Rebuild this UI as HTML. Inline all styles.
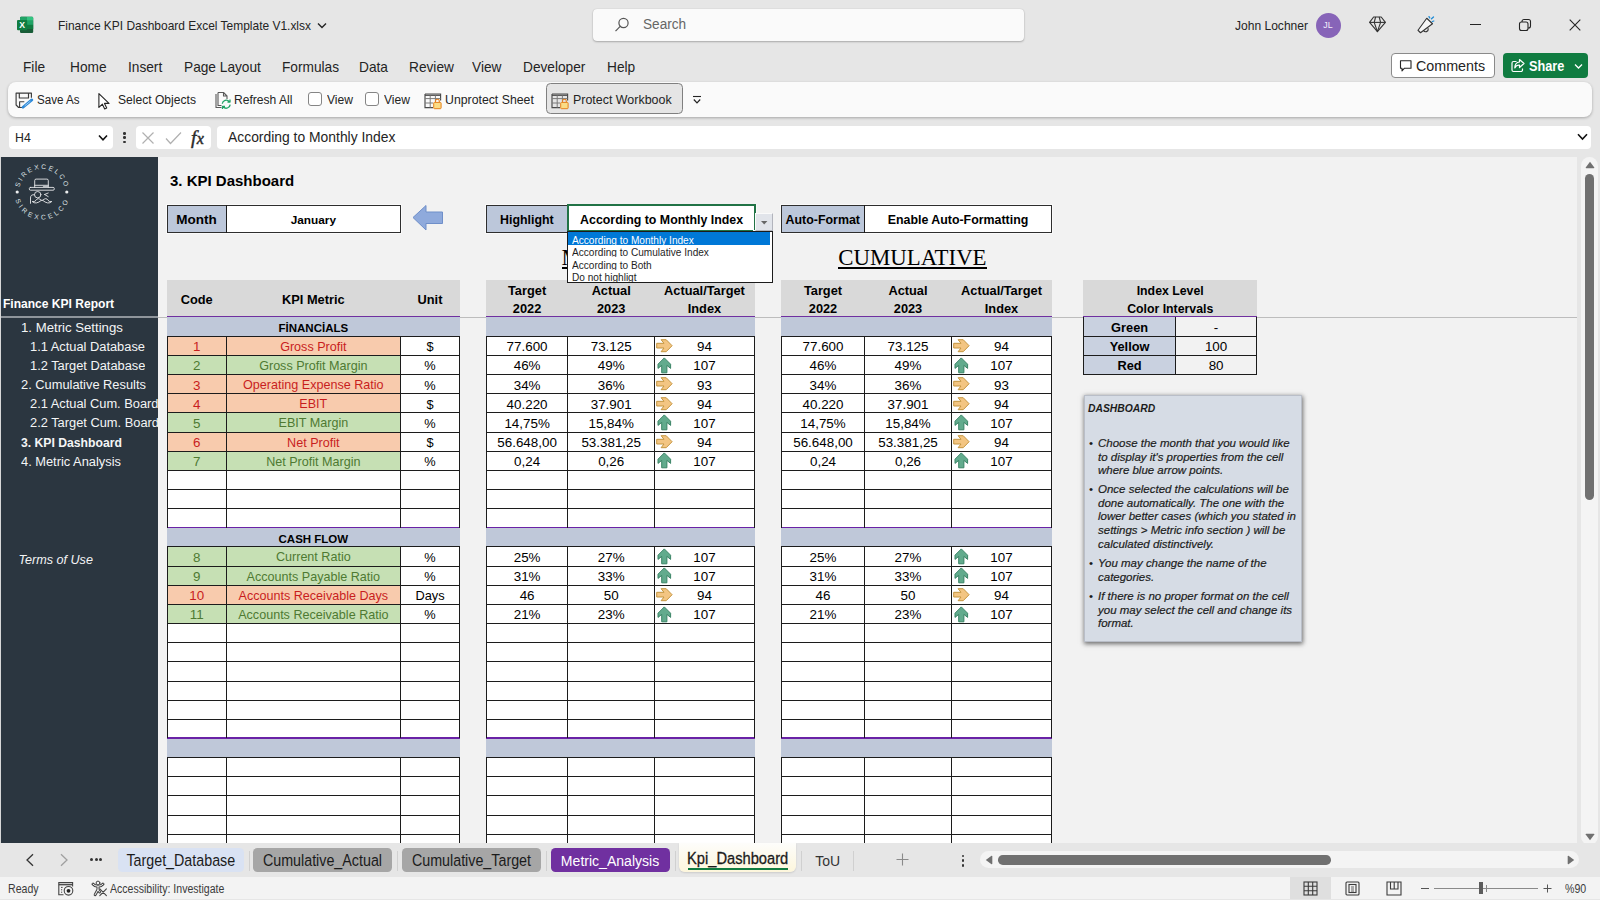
<!DOCTYPE html><html><head><meta charset="utf-8"><title>Finance KPI Dashboard Excel Template V1.xlsx</title><style>
*{box-sizing:border-box;margin:0;padding:0}
html,body{width:1600px;height:900px;overflow:hidden;background:#e6e6e6;font-family:"Liberation Sans",sans-serif;color:#1b1b1b}
.a{position:absolute;white-space:nowrap}
.c{position:absolute;white-space:nowrap;text-align:center;overflow:hidden}
.ui{font-family:"Liberation Sans",sans-serif;color:#242424}
.cell{font-size:12.6px;color:#000}
.b{font-weight:bold}
.i{font-style:italic}
.vl{position:absolute;width:1px;background:#1a1a1a}
.hl{position:absolute;height:1px;background:#1a1a1a}
</style></head><body>
<!-- title bar -->
<svg class="a" style="left:14px;top:14px" width="22" height="22" viewBox="0 0 22 22">
<rect x="6" y="2.7" width="13.2" height="16.3" rx="1.2" fill="#185c37"/>
<path d="M7.2 2.7 H12.6 V6.8 H6 V3.9 Q6 2.7 7.2 2.7Z" fill="#21a366"/><path d="M12.6 2.7 H18 Q19.2 2.7 19.2 3.9 V6.8 H12.6Z" fill="#33c481"/>
<rect x="6" y="6.8" width="6.6" height="4.1" fill="#107c41"/><rect x="12.6" y="6.8" width="6.6" height="4.1" fill="#21a366"/>
<rect x="6" y="10.9" width="6.6" height="4.1" fill="#185c37"/><rect x="12.6" y="10.9" width="6.6" height="4.1" fill="#107c41"/>
<rect x="3" y="6" width="10.2" height="10.2" rx="1" fill="#107c41"/>
<text x="8.1" y="14.2" font-family="Liberation Sans, sans-serif" font-weight="bold" font-size="8.6" fill="#fff" text-anchor="middle">X</text>
</svg>
<div class="a ui" style="left:58px;top:17.78px;font-size:12.72px;line-height:15.3px;color:#242424;transform:scaleX(0.94);transform-origin:0 50%;">Finance KPI Dashboard Excel Template V1.xlsx</div>
<svg class="a" style="left:316.5px;top:21.5px" width="10" height="8" viewBox="0 0 10 8"><path d="M1 1.5 L5 5.5 L9 1.5" fill="none" stroke="#242424" stroke-width="1.4"/></svg>
<div class="a" style="left:593px;top:9px;width:431px;height:32px;background:#fafafa;border-radius:4px;box-shadow:0 1px 2px rgba(0,0,0,.25),0 0 1px rgba(0,0,0,.2)"></div>
<svg class="a" style="left:613px;top:16px" width="18" height="18" viewBox="0 0 18 18"><circle cx="10.5" cy="7" r="4.6" fill="none" stroke="#555" stroke-width="1.2"/><path d="M7.2 10.4 L2.5 15.2" stroke="#555" stroke-width="1.2" fill="none"/></svg>
<div class="a ui" style="left:643px;top:16.18px;font-size:14.47px;line-height:17.4px;color:#666;transform:scaleX(0.94);transform-origin:0 50%;">Search</div>
<div class="a ui" style="left:1234.5px;top:18.27px;font-size:12.82px;line-height:15.4px;color:#242424;transform:scaleX(0.94);transform-origin:0 50%;">John Lochner</div>
<div class="a" style="left:1315.5px;top:12.5px;width:25px;height:25px;border-radius:50%;background:#8764b8"></div>
<div class="c" style="left:1315.5px;top:13px;width:25px;height:25px;line-height:25px;font-size:8.8px;color:#f3eefa;overflow:visible">JL</div>
<svg class="a" style="left:1367px;top:14px" width="20" height="20" viewBox="0 0 20 20" fill="none" stroke="#333" stroke-width="1.1" stroke-linejoin="round">
<path d="M6.6 3 H14.2 L18.4 8.4 L10.4 17.6 L2.6 8.4 Z"/><path d="M2.6 8.4 H18.4"/><path d="M8.6 3 L7.2 8.4 L10.4 17.6 L13.6 8.4 L12.2 3"/></svg>
<svg class="a" style="left:1415px;top:13px" width="22" height="22" viewBox="0 0 22 22" fill="none" stroke="#333" stroke-width="1.1" stroke-linejoin="round">
<path d="M11.75 5.25 L17.5 10.75 L5.5 19.75 L3 17.25 Z" fill="#f5f5f5"/><path d="M8.6 17.6 a2.5 2.5 0 0 0 4.6 -1.6 L12.8 15.2"/>
<path d="M14 3.6 l0.7 1.3 M16.5 5.8 l2-1.8 M17.3 8.5 l1.5-0.5" stroke="#1e8bd6" stroke-width="1.3" stroke-linecap="round"/></svg>
<div class="a" style="left:1470px;top:24px;width:11px;height:1px;background:#242424"></div>
<svg class="a" style="left:1518px;top:18px" width="14" height="14" viewBox="0 0 14 14" fill="none" stroke="#242424" stroke-width="1.1"><rect x="1.5" y="4" width="8.5" height="8.5" rx="2"/><path d="M4 4 V3.5 a2 2 0 0 1 2-2 H10.5 a2 2 0 0 1 2 2 V8 a2 2 0 0 1 -2 2 H10"/></svg>
<svg class="a" style="left:1569px;top:19px" width="12" height="12" viewBox="0 0 12 12"><path d="M0.7 0.7 L11.3 11.3 M11.3 0.7 L0.7 11.3" stroke="#242424" stroke-width="1.1"/></svg>
<!-- menu -->
<div class="a ui" style="left:22.5px;top:58.67px;font-size:14.57px;line-height:17.5px;color:#242424;transform:scaleX(0.94);transform-origin:0 50%;">File</div>
<div class="a ui" style="left:70px;top:58.67px;font-size:14.57px;line-height:17.5px;color:#242424;transform:scaleX(0.94);transform-origin:0 50%;">Home</div>
<div class="a ui" style="left:128px;top:58.67px;font-size:14.57px;line-height:17.5px;color:#242424;transform:scaleX(0.94);transform-origin:0 50%;">Insert</div>
<div class="a ui" style="left:184px;top:58.67px;font-size:14.57px;line-height:17.5px;color:#242424;transform:scaleX(0.94);transform-origin:0 50%;">Page Layout</div>
<div class="a ui" style="left:282px;top:58.67px;font-size:14.57px;line-height:17.5px;color:#242424;transform:scaleX(0.94);transform-origin:0 50%;">Formulas</div>
<div class="a ui" style="left:359px;top:58.67px;font-size:14.57px;line-height:17.5px;color:#242424;transform:scaleX(0.94);transform-origin:0 50%;">Data</div>
<div class="a ui" style="left:409px;top:58.67px;font-size:14.57px;line-height:17.5px;color:#242424;transform:scaleX(0.94);transform-origin:0 50%;">Review</div>
<div class="a ui" style="left:472px;top:58.67px;font-size:14.57px;line-height:17.5px;color:#242424;transform:scaleX(0.94);transform-origin:0 50%;">View</div>
<div class="a ui" style="left:523px;top:58.67px;font-size:14.57px;line-height:17.5px;color:#242424;transform:scaleX(0.94);transform-origin:0 50%;">Developer</div>
<div class="a ui" style="left:607px;top:58.67px;font-size:14.57px;line-height:17.5px;color:#242424;transform:scaleX(0.94);transform-origin:0 50%;">Help</div>
<div class="a" style="left:1391px;top:53px;width:103.5px;height:25px;background:#fff;border:1px solid #8a8a8a;border-radius:4px"></div>
<svg class="a" style="left:1399px;top:59px" width="14" height="14" viewBox="0 0 14 14" fill="none" stroke="#242424" stroke-width="1.1" stroke-linejoin="round"><path d="M1.5 1.8 H12 V9.2 H5.5 L3 11.8 V9.2 H1.5 Z"/></svg>
<div class="a ui" style="left:1416px;top:56.94px;font-size:15.21px;line-height:18.3px;color:#242424;transform:scaleX(0.94);transform-origin:0 50%;">Comments</div>
<div class="a" style="left:1503px;top:53px;width:84.5px;height:25px;background:#107c41;border-radius:4px"></div>
<svg class="a" style="left:1510px;top:58px" width="16" height="16" viewBox="0 0 16 16" fill="none" stroke="#fff" stroke-width="1.2" stroke-linejoin="round"><path d="M6.5 3.5 H3.5 a1.5 1.5 0 0 0 -1.5 1.5 V12 a1.5 1.5 0 0 0 1.5 1.5 H11 a1.5 1.5 0 0 0 1.5 -1.5 V10.5"/><path d="M9.5 1.5 L14 5.5 L9.5 9.5 V7 Q6 7 4.8 10 Q4.8 4.5 9.5 4 Z"/></svg>
<div class="a ui" style="left:1528.5px;top:58.36px;font-size:14.17px;line-height:17.0px;color:#fff;font-weight:bold;transform:scaleX(0.9);transform-origin:0 50%;">Share</div>
<svg class="a" style="left:1574px;top:63px" width="9" height="7" viewBox="0 0 9 7"><path d="M1 1.5 L4.5 5 L8 1.5" fill="none" stroke="#fff" stroke-width="1.3"/></svg>
<!-- toolbar -->
<div class="a" style="left:8px;top:82px;width:1584px;height:35px;background:#fafafa;border-radius:8px;box-shadow:0 1px 3px rgba(0,0,0,.28)"></div>
<svg class="a" style="left:15px;top:91px" width="19" height="18" viewBox="0 0 19 18" fill="none" stroke="#3b3b3b" stroke-width="1.15" stroke-linejoin="round">
<path d="M16.4 6.8 V2.1 H1.1 V14 L3.6 16.5 H7"/><path d="M4.3 2.1 V7 H13.5 V2.1"/><path d="M4.6 16.5 V10.7 H9.3"/>
<path d="M8 16.2 L16.8 8.9" stroke="#2b88d8" stroke-width="2.7" stroke-linecap="round"/><path d="M9.6 14.9 L15.4 10.1" stroke="#cfe6f8" stroke-width="0.7"/></svg>
<div class="a ui" style="left:36.9px;top:93.15px;font-size:12.61px;line-height:15.1px;color:#242424;transform:scaleX(0.92);transform-origin:0 50%;">Save As</div>
<svg class="a" style="left:97px;top:92px" width="14" height="18" viewBox="0 0 14 18"><path d="M1.9 1.7 V15.4 L5.4 12.2 L7.7 16.9 L9.7 16 L7.5 11.4 H12 Z" fill="#fff" stroke="#242424" stroke-width="1.1" stroke-linejoin="round"/></svg>
<div class="a ui" style="left:117.5px;top:92.0px;font-size:13.15px;line-height:15.8px;color:#242424;transform:scaleX(0.92);transform-origin:0 50%;">Select Objects</div>
<svg class="a" style="left:214px;top:91px" width="18" height="19" viewBox="0 0 18 19" fill="none" stroke-linejoin="round">
<path d="M2 3 V16.5 H7.5" stroke="#5a5a5a" stroke-width="1.1"/><path d="M4 1.5 H9.5 L13 5 V8 M4 1.5 V14.5 H7.5 M9.5 1.5 V5 H13" stroke="#5a5a5a" stroke-width="1.1"/>
<path d="M8.3 12.8 a4 4 0 0 1 7 -2.2 M16 8.5 V11 H13.5 M16.2 13.6 a4 4 0 0 1 -7 2.2 M8.5 18 V15.5 H11" stroke="#21a366" stroke-width="1.3"/></svg>
<div class="a ui" style="left:234px;top:92.0px;font-size:13.15px;line-height:15.8px;color:#242424;transform:scaleX(0.92);transform-origin:0 50%;">Refresh All</div>
<div class="a" style="left:308.2px;top:92.3px;width:13.8px;height:13.5px;background:#fff;border:1px solid #858585;border-radius:3px"></div>
<div class="a ui" style="left:327px;top:92.0px;font-size:13.15px;line-height:15.8px;color:#242424;transform:scaleX(0.92);transform-origin:0 50%;">View</div>
<div class="a" style="left:364.8px;top:92.3px;width:13.8px;height:13.5px;background:#fff;border:1px solid #858585;border-radius:3px"></div>
<div class="a ui" style="left:383.5px;top:92.0px;font-size:13.15px;line-height:15.8px;color:#242424;transform:scaleX(0.92);transform-origin:0 50%;">View</div>
<svg class="a" style="left:424px;top:91px" width="19" height="19" viewBox="0 0 19 19" fill="none">
<path d="M1 3 H16.6 V9.5 M1 3 V16.6 H9" stroke="#4a4a4a" stroke-width="1.15"/><path d="M1 4.3 H16.6" stroke="#4a4a4a" stroke-width="1.2"/>
<path d="M1 7.6 H16.6 M1 12 H9 M6.2 4.5 V16.6 M11.4 4.5 V10" stroke="#7a7a7a" stroke-width="1"/>
<rect x="9.7" y="11.4" width="7.4" height="6.3" rx="0.8" fill="#fbdc85" stroke="#e5801c" stroke-width="1"/><path d="M11.5 11.2 V10.1 a1.9 1.9 0 0 1 3.8 0 V11.2" stroke="#e5801c" stroke-width="1.1"/></svg>
<div class="a ui" style="left:445px;top:91.89px;font-size:13.37px;line-height:16.0px;color:#242424;transform:scaleX(0.92);transform-origin:0 50%;">Unprotect Sheet</div>
<div class="a" style="left:545.7px;top:83.2px;width:137px;height:31.3px;background:#e5e5e5;border:1px solid #808080;border-radius:4.5px"></div>
<svg class="a" style="left:551px;top:91px" width="19" height="19" viewBox="0 0 19 19" fill="none">
<path d="M1 3 H16.6 V9.5 M1 3 V16.6 H9" stroke="#4a4a4a" stroke-width="1.15"/><path d="M1 4.3 H16.6" stroke="#4a4a4a" stroke-width="1.2"/>
<path d="M1 7.6 H16.6 M1 12 H9 M6.2 4.5 V16.6 M11.4 4.5 V10" stroke="#7a7a7a" stroke-width="1"/>
<rect x="9.7" y="11.4" width="7.4" height="6.3" rx="0.8" fill="#fbdc85" stroke="#e5801c" stroke-width="1"/><path d="M11.5 11.2 V10.1 a1.9 1.9 0 0 1 3.8 0 V11.2" stroke="#e5801c" stroke-width="1.1"/></svg>
<div class="a ui" style="left:572.5px;top:91.8px;font-size:13.53px;line-height:16.2px;color:#242424;transform:scaleX(0.92);transform-origin:0 50%;">Protect Workbook</div>
<svg class="a" style="left:692px;top:95px" width="10" height="10" viewBox="0 0 10 10"><path d="M1 1.5 H9" stroke="#242424" stroke-width="1.1"/><path d="M1.8 4.5 L5 7.8 L8.2 4.5" fill="none" stroke="#242424" stroke-width="1.2"/></svg>
<!-- formula bar -->
<div class="a" style="left:9px;top:126px;width:104px;height:23px;background:#fff;border-radius:4px"></div>
<div class="a ui" style="left:14.5px;top:130.64px;font-size:12.68px;line-height:15.2px;color:#242424;transform:scaleX(0.97);transform-origin:0 50%;">H4</div>
<svg class="a" style="left:98px;top:134px" width="10" height="8" viewBox="0 0 10 8"><path d="M1 1.5 L5 5.8 L9 1.5" fill="none" stroke="#111" stroke-width="1.6"/></svg>
<div class="a" style="left:123.3px;top:132px;width:2.5px;height:2.5px;background:#333;border-radius:50%"></div>
<div class="a" style="left:123.3px;top:136.3px;width:2.5px;height:2.5px;background:#333;border-radius:50%"></div>
<div class="a" style="left:123.3px;top:140.6px;width:2.5px;height:2.5px;background:#333;border-radius:50%"></div>
<div class="a" style="left:136px;top:126px;width:75px;height:23px;background:#fff;border-radius:4px"></div>
<svg class="a" style="left:141px;top:131px" width="14" height="14" viewBox="0 0 14 14"><path d="M1.5 1.5 L12.5 12.5 M12.5 1.5 L1.5 12.5" stroke="#b0b0b0" stroke-width="1.2"/></svg>
<svg class="a" style="left:165px;top:131px" width="17" height="14" viewBox="0 0 17 14"><path d="M1 7.5 L5.5 12.5 L16 1.5" fill="none" stroke="#b0b0b0" stroke-width="1.2"/></svg>
<div class="a" style="left:191px;top:125.5px;font:italic 19.5px/23px 'Liberation Serif',serif;color:#2a2a2a;letter-spacing:0.3px;-webkit-text-stroke:0.45px #2a2a2a">f<span style="font-size:16px">x</span></div>
<div class="a" style="left:217px;top:126px;width:1374px;height:23px;background:#fff;border-radius:4px"></div>
<div class="a ui" style="left:227.5px;top:129.09px;font-size:14.32px;line-height:17.2px;color:#242424;transform:scaleX(0.97);transform-origin:0 50%;">According to Monthly Index</div>
<svg class="a" style="left:1577px;top:133px" width="11" height="8" viewBox="0 0 11 8"><path d="M1 1.2 L5.5 6 L10 1.2" fill="none" stroke="#111" stroke-width="1.6"/></svg>
<!-- sheet -->
<div class="a" style="left:0px;top:157px;width:1577.3px;height:686.1px;background:#f2f2f2"></div>
<div class="a" style="left:0px;top:157.4px;width:158px;height:685.7px;background:#2b3640"></div>
<!-- sidebar -->
<div class="a" style="left:0px;top:157px;width:1.2px;height:686.1px;background:#d8d8d8"></div>
<svg class="a" style="left:12.3px;top:162px" width="60" height="60" viewBox="-30 -30 60 60">
<defs><path id="arcT" d="M -22.9 0 A 22.9 22.9 0 0 1 22.9 0"/><path id="arcB" d="M -27.6 0 A 27.6 27.6 0 0 0 27.6 0"/></defs>
<g font-family="Liberation Sans, sans-serif" font-size="6.7" fill="#dfe2e5">
<text letter-spacing="2.05"><textPath href="#arcT" startOffset="50.8%" text-anchor="middle">SIREXCELCO</textPath></text>
<text letter-spacing="2.9"><textPath href="#arcB" startOffset="51%" text-anchor="middle">SIREXCELCO</textPath></text></g>
<circle cx="-24.8" cy="0" r="1.6" fill="#eceeef"/><circle cx="24.8" cy="0" r="1.6" fill="#eceeef"/>
<g fill="none" stroke="#e6e8ea" stroke-width="0.9" stroke-linejoin="round" stroke-linecap="round">
<rect x="-12.7" y="-4.6" width="25" height="2.8" rx="1.2"/>
<path d="M-7.3 -4.6 V-11.5 a1.4 1.4 0 0 1 1.4 -1.4 H4.9 a1.4 1.4 0 0 1 1.4 1.4 V-4.6"/><path d="M-7.3 -6.7 H6.3"/><path d="M1.5 -5.7 H6" stroke-width="1.4" stroke="#b9bec3"/>
<circle cx="-4.3" cy="2.7" r="3.2"/><path d="M-7.5 2.8 q-4 -0.8 -4 3.2 V11.3"/>
<path d="M2.6 2.5 L6.2 1 M2.6 2.5 L6.2 4.6"/>
<path d="M-0.6 8.3 q-3.6 -3.4 -5.4 0 q-1.6 2 -3.8 1.2 q3.6 3.6 9.2 -1.2 Z"/>
<path d="M0.6 8.3 q3.6 -3.4 5.4 0 q1.6 2 3.8 1.2 q-3.6 3.6 -9.2 -1.2 Z"/>
</g></svg>
<div class="a" style="left:3px;top:296.8px;font-size:12.05px;line-height:14.5px;color:#fff;font-weight:bold">Finance KPI Report</div>
<div class="a" style="left:1px;top:316.4px;width:157px;height:1.6px;background:#8f959b"></div>
<div class="a" style="left:21px;top:319px;height:18px;line-height:18px;font-size:13.2px;color:#f4f5f6;max-width:137px;overflow:hidden">1. Metric Settings</div>
<div class="a" style="left:30px;top:338px;height:18px;line-height:18px;font-size:12.85px;color:#f4f5f6;max-width:128px;overflow:hidden">1.1 Actual Database</div>
<div class="a" style="left:30px;top:357px;height:18px;line-height:18px;font-size:12.85px;color:#f4f5f6;max-width:128px;overflow:hidden">1.2 Target Database</div>
<div class="a" style="left:21px;top:376px;height:18px;line-height:18px;font-size:12.85px;color:#f4f5f6;max-width:137px;overflow:hidden">2. Cumulative Results</div>
<div class="a" style="left:30px;top:395px;height:18px;line-height:18px;font-size:12.85px;color:#f4f5f6;max-width:128px;overflow:hidden">2.1 Actual Cum. Board</div>
<div class="a" style="left:30px;top:414px;height:18px;line-height:18px;font-size:12.85px;color:#f4f5f6;max-width:128px;overflow:hidden">2.2 Target Cum. Board</div>
<div class="a" style="left:21px;top:433.5px;height:18px;line-height:18px;font-size:12.2px;color:#f4f5f6;font-weight:bold;max-width:137px;overflow:hidden">3. KPI Dashboard</div>
<div class="a" style="left:21px;top:453px;height:18px;line-height:18px;font-size:12.85px;color:#f4f5f6;max-width:137px;overflow:hidden">4. Metric Analysis</div>
<div class="a" style="left:18.5px;top:552.5px;font-size:12.6px;line-height:15.1px;color:#f4f5f6;font-style:italic">Terms of Use</div>
<div class="a" style="left:158px;top:316.7px;width:1419.3px;height:1px;background:#bdbdbd"></div>
<div class="a" style="left:170px;top:172.2px;font-size:15.0px;line-height:18.0px;font-weight:bold;color:#000">3. KPI Dashboard</div>
<div class="a" style="left:166.5px;top:204.9px;width:234.70000000000002px;height:27.7px;background:#fff;border:1.3px solid #2e2e2e;box-shadow:0 0 0 0.8px rgba(255,255,255,.75)"></div>
<div class="a" style="left:167.7px;top:206px;width:58.5px;height:25.8px;background:#bcc7da"></div>
<div class="a" style="left:225.7px;top:205px;width:1px;height:27.8px;background:#1c1c1c"></div>
<div class="c" style="left:166.7px;top:205.5px;width:59.5px;height:28px;line-height:28px;font-size:13.5px;font-weight:bold;color:#000">Month</div>
<div class="c" style="left:226.2px;top:205.5px;width:174.3px;height:28px;line-height:28px;font-size:11.8px;font-weight:bold;color:#000">January</div>
<div class="a" style="left:485.6px;top:204.9px;width:270.3999999999999px;height:27.7px;background:#fff;border:1.3px solid #2e2e2e;box-shadow:0 0 0 0.8px rgba(255,255,255,.75)"></div>
<div class="a" style="left:486.8px;top:206px;width:81.09999999999997px;height:25.8px;background:#bcc7da"></div>
<div class="a" style="left:567.4px;top:205px;width:1px;height:27.8px;background:#1c1c1c"></div>
<div class="c" style="left:485.8px;top:205.5px;width:82.09999999999997px;height:28px;line-height:28px;font-size:12.4px;font-weight:bold;color:#000">Highlight</div>
<div class="c" style="left:567.9px;top:205.5px;width:187.39999999999998px;height:28px;line-height:28px;font-size:12.38px;font-weight:bold;color:#000">According to Monthly Index</div>
<div class="a" style="left:780.8px;top:204.9px;width:271.4px;height:27.7px;background:#fff;border:1.3px solid #2e2e2e;box-shadow:0 0 0 0.8px rgba(255,255,255,.75)"></div>
<div class="a" style="left:782px;top:206px;width:82.5px;height:25.8px;background:#bcc7da"></div>
<div class="a" style="left:864.0px;top:205px;width:1px;height:27.8px;background:#1c1c1c"></div>
<div class="c" style="left:781px;top:205.5px;width:83.5px;height:28px;line-height:28px;font-size:12.4px;font-weight:bold;color:#000">Auto-Format</div>
<div class="c" style="left:864.5px;top:205.5px;width:187.0px;height:28px;line-height:28px;font-size:12.4px;font-weight:bold;color:#000">Enable Auto-Formatting</div>
<svg class="a" style="left:411px;top:203px" width="34" height="30" viewBox="0 0 34 30"><path d="M2 14.5 L15 2.5 V9 H31.5 V20.5 H15 V27 Z" fill="#8faadc" stroke="#6f8fc9" stroke-width="1"/></svg>
<div class="a" style="left:561.5px;top:245.4px;font:22.83px/26px 'Liberation Serif',serif;color:#000">MONTHLY</div>
<div class="a" style="left:561.5px;top:267px;width:140px;height:1.6px;background:#000"></div>
<div class="a" style="left:838.2px;top:245.4px;font:22.83px/26px 'Liberation Serif',serif;color:#000">CUMULATIVE</div>
<div class="a" style="left:838.2px;top:267px;width:148.4px;height:1.6px;background:#000"></div>
<div class="a" style="left:166.7px;top:280px;width:293.3px;height:36.5px;background:#d9d9d9"></div>
<div class="c" style="left:167.2px;top:290.5px;width:59.0px;height:18px;line-height:18px;font-size:12.8px;font-weight:bold;color:#000">Code</div>
<div class="c" style="left:226.2px;top:290.5px;width:174.3px;height:18px;line-height:18px;font-size:12.8px;font-weight:bold;color:#000">KPI Metric</div>
<div class="c" style="left:400.5px;top:290.5px;width:59.0px;height:18px;line-height:18px;font-size:12.8px;font-weight:bold;color:#000">Unit</div>
<div class="a" style="left:166.7px;top:316.2px;width:293.3px;height:1.2px;background:#7030a0"></div>
<div class="a" style="left:485.8px;top:280px;width:269.09999999999997px;height:36.5px;background:#d9d9d9"></div>
<div class="c" style="left:476.3px;top:281.5px;width:101.59999999999997px;height:18px;line-height:18px;font-size:12.8px;font-weight:bold;color:#000;overflow:visible">Target</div>
<div class="c" style="left:476.3px;top:299.5px;width:101.59999999999997px;height:18px;line-height:18px;font-size:12.8px;font-weight:bold;color:#000;overflow:visible">2022</div>
<div class="c" style="left:557.9px;top:281.5px;width:106.60000000000002px;height:18px;line-height:18px;font-size:12.8px;font-weight:bold;color:#000;overflow:visible">Actual</div>
<div class="c" style="left:557.9px;top:299.5px;width:106.60000000000002px;height:18px;line-height:18px;font-size:12.8px;font-weight:bold;color:#000;overflow:visible">2023</div>
<div class="c" style="left:644.5px;top:281.5px;width:119.89999999999998px;height:18px;line-height:18px;font-size:12.8px;font-weight:bold;color:#000;overflow:visible">Actual/Target</div>
<div class="c" style="left:644.5px;top:299.5px;width:119.89999999999998px;height:18px;line-height:18px;font-size:12.8px;font-weight:bold;color:#000;overflow:visible">Index</div>
<div class="a" style="left:485.8px;top:316.2px;width:269.1px;height:1.2px;background:#7030a0"></div>
<div class="a" style="left:781.0px;top:280px;width:271.0px;height:36.5px;background:#d9d9d9"></div>
<div class="c" style="left:771.5px;top:281.5px;width:103.0px;height:18px;line-height:18px;font-size:12.8px;font-weight:bold;color:#000;overflow:visible">Target</div>
<div class="c" style="left:771.5px;top:299.5px;width:103.0px;height:18px;line-height:18px;font-size:12.8px;font-weight:bold;color:#000;overflow:visible">2022</div>
<div class="c" style="left:854.5px;top:281.5px;width:107.0px;height:18px;line-height:18px;font-size:12.8px;font-weight:bold;color:#000;overflow:visible">Actual</div>
<div class="c" style="left:854.5px;top:299.5px;width:107.0px;height:18px;line-height:18px;font-size:12.8px;font-weight:bold;color:#000;overflow:visible">2023</div>
<div class="c" style="left:941.5px;top:281.5px;width:120.0px;height:18px;line-height:18px;font-size:12.8px;font-weight:bold;color:#000;overflow:visible">Actual/Target</div>
<div class="c" style="left:941.5px;top:299.5px;width:120.0px;height:18px;line-height:18px;font-size:12.8px;font-weight:bold;color:#000;overflow:visible">Index</div>
<div class="a" style="left:781.0px;top:316.2px;width:271.0px;height:1.2px;background:#7030a0"></div>
<div class="a" style="left:166.7px;top:317.45000000000005px;width:293.3px;height:18.849999999999998px;background:#bfc8d9"></div>
<div class="a" style="left:167.2px;top:336.3px;width:292.3px;height:191.49999999999994px;background:#fff"></div>
<div class="a" style="left:485.8px;top:317.45000000000005px;width:269.09999999999997px;height:18.849999999999998px;background:#bfc8d9"></div>
<div class="a" style="left:486.3px;top:336.3px;width:268.09999999999997px;height:191.49999999999994px;background:#fff"></div>
<div class="a" style="left:781.0px;top:317.45000000000005px;width:271.0px;height:18.849999999999998px;background:#bfc8d9"></div>
<div class="a" style="left:781.5px;top:336.3px;width:270.0px;height:191.49999999999994px;background:#fff"></div>
<div class="c" style="left:167.2px;top:318.95000000000005px;width:292.3px;height:19.15px;line-height:19.15px;font-size:11.5px;font-weight:bold;color:#000">FİNANCİALS</div>
<div class="a" style="left:167.2px;top:336.3px;width:233.3px;height:19.15px;background:#f8cbad"></div>
<div class="c" style="left:167.2px;top:337.3px;width:59.0px;height:19.15px;line-height:19.15px;font-size:13.4px;color:#c81e1e">1</div>
<div class="c" style="left:226.2px;top:337.8px;width:174.3px;height:19.15px;line-height:19.15px;font-size:12.58px;color:#c81e1e">Gross Profit</div>
<div class="c" style="left:400.5px;top:337.3px;width:59.0px;height:19.15px;line-height:19.15px;font-size:12.8px;color:#000">$</div>
<div class="c" style="left:486.3px;top:337.3px;width:81.59999999999997px;height:19.15px;line-height:19.15px;font-size:13.4px;color:#000">77.600</div>
<div class="c" style="left:567.9px;top:337.3px;width:86.60000000000002px;height:19.15px;line-height:19.15px;font-size:13.4px;color:#000">73.125</div>
<div class="c" style="left:654.5px;top:337.3px;width:99.89999999999998px;height:19.15px;line-height:19.15px;font-size:13.4px;color:#000">94</div>
<svg class="a" style="left:656.4px;top:339.1px" width="17" height="14" viewBox="0 0 17 14"><path d="M0.7 4.3 H8 L5.1 0.7 H10.2 L16.1 6.7 L10.2 12.7 H5.1 L8 9 H0.7 Z" fill="#f3c582" stroke="#c4953f" stroke-width="1" stroke-linejoin="round"/></svg>
<div class="c" style="left:781.5px;top:337.3px;width:83.0px;height:19.15px;line-height:19.15px;font-size:13.4px;color:#000">77.600</div>
<div class="c" style="left:864.5px;top:337.3px;width:87.0px;height:19.15px;line-height:19.15px;font-size:13.4px;color:#000">73.125</div>
<div class="c" style="left:951.5px;top:337.3px;width:100.0px;height:19.15px;line-height:19.15px;font-size:13.4px;color:#000">94</div>
<svg class="a" style="left:953.4px;top:339.1px" width="17" height="14" viewBox="0 0 17 14"><path d="M0.7 4.3 H8 L5.1 0.7 H10.2 L16.1 6.7 L10.2 12.7 H5.1 L8 9 H0.7 Z" fill="#f3c582" stroke="#c4953f" stroke-width="1" stroke-linejoin="round"/></svg>
<div class="a" style="left:167.2px;top:355.45px;width:233.3px;height:19.15px;background:#c6e0b4"></div>
<div class="c" style="left:167.2px;top:356.45px;width:59.0px;height:19.15px;line-height:19.15px;font-size:13.4px;color:#4e7a32">2</div>
<div class="c" style="left:226.2px;top:356.95px;width:174.3px;height:19.15px;line-height:19.15px;font-size:12.58px;color:#4e7a32">Gross Profit Margin</div>
<div class="c" style="left:400.5px;top:356.45px;width:59.0px;height:19.15px;line-height:19.15px;font-size:12.8px;color:#000">%</div>
<div class="c" style="left:486.3px;top:356.45px;width:81.59999999999997px;height:19.15px;line-height:19.15px;font-size:13.4px;color:#000">46%</div>
<div class="c" style="left:567.9px;top:356.45px;width:86.60000000000002px;height:19.15px;line-height:19.15px;font-size:13.4px;color:#000">49%</div>
<div class="c" style="left:654.5px;top:356.45px;width:99.89999999999998px;height:19.15px;line-height:19.15px;font-size:13.4px;color:#000">107</div>
<svg class="a" style="left:657.1px;top:356.6px" width="15" height="17" viewBox="0 0 15 17"><path d="M7.3 0.9 L13.6 7.2 V11.4 L9.9 8.4 V15.8 H4.7 V8.4 L1 11.4 V7.2 Z" fill="#62ab8d" stroke="#3b8466" stroke-width="1" stroke-linejoin="round"/></svg>
<div class="c" style="left:781.5px;top:356.45px;width:83.0px;height:19.15px;line-height:19.15px;font-size:13.4px;color:#000">46%</div>
<div class="c" style="left:864.5px;top:356.45px;width:87.0px;height:19.15px;line-height:19.15px;font-size:13.4px;color:#000">49%</div>
<div class="c" style="left:951.5px;top:356.45px;width:100.0px;height:19.15px;line-height:19.15px;font-size:13.4px;color:#000">107</div>
<svg class="a" style="left:954.1px;top:356.6px" width="15" height="17" viewBox="0 0 15 17"><path d="M7.3 0.9 L13.6 7.2 V11.4 L9.9 8.4 V15.8 H4.7 V8.4 L1 11.4 V7.2 Z" fill="#62ab8d" stroke="#3b8466" stroke-width="1" stroke-linejoin="round"/></svg>
<div class="a" style="left:167.2px;top:374.6px;width:233.3px;height:19.15px;background:#f8cbad"></div>
<div class="c" style="left:167.2px;top:375.6px;width:59.0px;height:19.15px;line-height:19.15px;font-size:13.4px;color:#c81e1e">3</div>
<div class="c" style="left:226.2px;top:376.1px;width:174.3px;height:19.15px;line-height:19.15px;font-size:12.58px;color:#c81e1e">Operating Expense Ratio</div>
<div class="c" style="left:400.5px;top:375.6px;width:59.0px;height:19.15px;line-height:19.15px;font-size:12.8px;color:#000">%</div>
<div class="c" style="left:486.3px;top:375.6px;width:81.59999999999997px;height:19.15px;line-height:19.15px;font-size:13.4px;color:#000">34%</div>
<div class="c" style="left:567.9px;top:375.6px;width:86.60000000000002px;height:19.15px;line-height:19.15px;font-size:13.4px;color:#000">36%</div>
<div class="c" style="left:654.5px;top:375.6px;width:99.89999999999998px;height:19.15px;line-height:19.15px;font-size:13.4px;color:#000">93</div>
<svg class="a" style="left:656.4px;top:377.4px" width="17" height="14" viewBox="0 0 17 14"><path d="M0.7 4.3 H8 L5.1 0.7 H10.2 L16.1 6.7 L10.2 12.7 H5.1 L8 9 H0.7 Z" fill="#f3c582" stroke="#c4953f" stroke-width="1" stroke-linejoin="round"/></svg>
<div class="c" style="left:781.5px;top:375.6px;width:83.0px;height:19.15px;line-height:19.15px;font-size:13.4px;color:#000">34%</div>
<div class="c" style="left:864.5px;top:375.6px;width:87.0px;height:19.15px;line-height:19.15px;font-size:13.4px;color:#000">36%</div>
<div class="c" style="left:951.5px;top:375.6px;width:100.0px;height:19.15px;line-height:19.15px;font-size:13.4px;color:#000">93</div>
<svg class="a" style="left:953.4px;top:377.4px" width="17" height="14" viewBox="0 0 17 14"><path d="M0.7 4.3 H8 L5.1 0.7 H10.2 L16.1 6.7 L10.2 12.7 H5.1 L8 9 H0.7 Z" fill="#f3c582" stroke="#c4953f" stroke-width="1" stroke-linejoin="round"/></svg>
<div class="a" style="left:167.2px;top:393.75px;width:233.3px;height:19.15px;background:#f8cbad"></div>
<div class="c" style="left:167.2px;top:394.75px;width:59.0px;height:19.15px;line-height:19.15px;font-size:13.4px;color:#c81e1e">4</div>
<div class="c" style="left:226.2px;top:395.25px;width:174.3px;height:19.15px;line-height:19.15px;font-size:12.58px;color:#c81e1e">EBIT</div>
<div class="c" style="left:400.5px;top:394.75px;width:59.0px;height:19.15px;line-height:19.15px;font-size:12.8px;color:#000">$</div>
<div class="c" style="left:486.3px;top:394.75px;width:81.59999999999997px;height:19.15px;line-height:19.15px;font-size:13.4px;color:#000">40.220</div>
<div class="c" style="left:567.9px;top:394.75px;width:86.60000000000002px;height:19.15px;line-height:19.15px;font-size:13.4px;color:#000">37.901</div>
<div class="c" style="left:654.5px;top:394.75px;width:99.89999999999998px;height:19.15px;line-height:19.15px;font-size:13.4px;color:#000">94</div>
<svg class="a" style="left:656.4px;top:396.6px" width="17" height="14" viewBox="0 0 17 14"><path d="M0.7 4.3 H8 L5.1 0.7 H10.2 L16.1 6.7 L10.2 12.7 H5.1 L8 9 H0.7 Z" fill="#f3c582" stroke="#c4953f" stroke-width="1" stroke-linejoin="round"/></svg>
<div class="c" style="left:781.5px;top:394.75px;width:83.0px;height:19.15px;line-height:19.15px;font-size:13.4px;color:#000">40.220</div>
<div class="c" style="left:864.5px;top:394.75px;width:87.0px;height:19.15px;line-height:19.15px;font-size:13.4px;color:#000">37.901</div>
<div class="c" style="left:951.5px;top:394.75px;width:100.0px;height:19.15px;line-height:19.15px;font-size:13.4px;color:#000">94</div>
<svg class="a" style="left:953.4px;top:396.6px" width="17" height="14" viewBox="0 0 17 14"><path d="M0.7 4.3 H8 L5.1 0.7 H10.2 L16.1 6.7 L10.2 12.7 H5.1 L8 9 H0.7 Z" fill="#f3c582" stroke="#c4953f" stroke-width="1" stroke-linejoin="round"/></svg>
<div class="a" style="left:167.2px;top:412.9px;width:233.3px;height:19.15px;background:#c6e0b4"></div>
<div class="c" style="left:167.2px;top:413.9px;width:59.0px;height:19.15px;line-height:19.15px;font-size:13.4px;color:#4e7a32">5</div>
<div class="c" style="left:226.2px;top:414.4px;width:174.3px;height:19.15px;line-height:19.15px;font-size:12.58px;color:#4e7a32">EBIT Margin</div>
<div class="c" style="left:400.5px;top:413.9px;width:59.0px;height:19.15px;line-height:19.15px;font-size:12.8px;color:#000">%</div>
<div class="c" style="left:486.3px;top:413.9px;width:81.59999999999997px;height:19.15px;line-height:19.15px;font-size:13.4px;color:#000">14,75%</div>
<div class="c" style="left:567.9px;top:413.9px;width:86.60000000000002px;height:19.15px;line-height:19.15px;font-size:13.4px;color:#000">15,84%</div>
<div class="c" style="left:654.5px;top:413.9px;width:99.89999999999998px;height:19.15px;line-height:19.15px;font-size:13.4px;color:#000">107</div>
<svg class="a" style="left:657.1px;top:414.1px" width="15" height="17" viewBox="0 0 15 17"><path d="M7.3 0.9 L13.6 7.2 V11.4 L9.9 8.4 V15.8 H4.7 V8.4 L1 11.4 V7.2 Z" fill="#62ab8d" stroke="#3b8466" stroke-width="1" stroke-linejoin="round"/></svg>
<div class="c" style="left:781.5px;top:413.9px;width:83.0px;height:19.15px;line-height:19.15px;font-size:13.4px;color:#000">14,75%</div>
<div class="c" style="left:864.5px;top:413.9px;width:87.0px;height:19.15px;line-height:19.15px;font-size:13.4px;color:#000">15,84%</div>
<div class="c" style="left:951.5px;top:413.9px;width:100.0px;height:19.15px;line-height:19.15px;font-size:13.4px;color:#000">107</div>
<svg class="a" style="left:954.1px;top:414.1px" width="15" height="17" viewBox="0 0 15 17"><path d="M7.3 0.9 L13.6 7.2 V11.4 L9.9 8.4 V15.8 H4.7 V8.4 L1 11.4 V7.2 Z" fill="#62ab8d" stroke="#3b8466" stroke-width="1" stroke-linejoin="round"/></svg>
<div class="a" style="left:167.2px;top:432.05px;width:233.3px;height:19.15px;background:#f8cbad"></div>
<div class="c" style="left:167.2px;top:433.05px;width:59.0px;height:19.15px;line-height:19.15px;font-size:13.4px;color:#c81e1e">6</div>
<div class="c" style="left:226.2px;top:433.55px;width:174.3px;height:19.15px;line-height:19.15px;font-size:12.58px;color:#c81e1e">Net Profit</div>
<div class="c" style="left:400.5px;top:433.05px;width:59.0px;height:19.15px;line-height:19.15px;font-size:12.8px;color:#000">$</div>
<div class="c" style="left:486.3px;top:433.05px;width:81.59999999999997px;height:19.15px;line-height:19.15px;font-size:13.4px;color:#000">56.648,00</div>
<div class="c" style="left:567.9px;top:433.05px;width:86.60000000000002px;height:19.15px;line-height:19.15px;font-size:13.4px;color:#000">53.381,25</div>
<div class="c" style="left:654.5px;top:433.05px;width:99.89999999999998px;height:19.15px;line-height:19.15px;font-size:13.4px;color:#000">94</div>
<svg class="a" style="left:656.4px;top:434.9px" width="17" height="14" viewBox="0 0 17 14"><path d="M0.7 4.3 H8 L5.1 0.7 H10.2 L16.1 6.7 L10.2 12.7 H5.1 L8 9 H0.7 Z" fill="#f3c582" stroke="#c4953f" stroke-width="1" stroke-linejoin="round"/></svg>
<div class="c" style="left:781.5px;top:433.05px;width:83.0px;height:19.15px;line-height:19.15px;font-size:13.4px;color:#000">56.648,00</div>
<div class="c" style="left:864.5px;top:433.05px;width:87.0px;height:19.15px;line-height:19.15px;font-size:13.4px;color:#000">53.381,25</div>
<div class="c" style="left:951.5px;top:433.05px;width:100.0px;height:19.15px;line-height:19.15px;font-size:13.4px;color:#000">94</div>
<svg class="a" style="left:953.4px;top:434.9px" width="17" height="14" viewBox="0 0 17 14"><path d="M0.7 4.3 H8 L5.1 0.7 H10.2 L16.1 6.7 L10.2 12.7 H5.1 L8 9 H0.7 Z" fill="#f3c582" stroke="#c4953f" stroke-width="1" stroke-linejoin="round"/></svg>
<div class="a" style="left:167.2px;top:451.2px;width:233.3px;height:19.15px;background:#c6e0b4"></div>
<div class="c" style="left:167.2px;top:452.2px;width:59.0px;height:19.15px;line-height:19.15px;font-size:13.4px;color:#4e7a32">7</div>
<div class="c" style="left:226.2px;top:452.7px;width:174.3px;height:19.15px;line-height:19.15px;font-size:12.58px;color:#4e7a32">Net Profit Margin</div>
<div class="c" style="left:400.5px;top:452.2px;width:59.0px;height:19.15px;line-height:19.15px;font-size:12.8px;color:#000">%</div>
<div class="c" style="left:486.3px;top:452.2px;width:81.59999999999997px;height:19.15px;line-height:19.15px;font-size:13.4px;color:#000">0,24</div>
<div class="c" style="left:567.9px;top:452.2px;width:86.60000000000002px;height:19.15px;line-height:19.15px;font-size:13.4px;color:#000">0,26</div>
<div class="c" style="left:654.5px;top:452.2px;width:99.89999999999998px;height:19.15px;line-height:19.15px;font-size:13.4px;color:#000">107</div>
<svg class="a" style="left:657.1px;top:452.4px" width="15" height="17" viewBox="0 0 15 17"><path d="M7.3 0.9 L13.6 7.2 V11.4 L9.9 8.4 V15.8 H4.7 V8.4 L1 11.4 V7.2 Z" fill="#62ab8d" stroke="#3b8466" stroke-width="1" stroke-linejoin="round"/></svg>
<div class="c" style="left:781.5px;top:452.2px;width:83.0px;height:19.15px;line-height:19.15px;font-size:13.4px;color:#000">0,24</div>
<div class="c" style="left:864.5px;top:452.2px;width:87.0px;height:19.15px;line-height:19.15px;font-size:13.4px;color:#000">0,26</div>
<div class="c" style="left:951.5px;top:452.2px;width:100.0px;height:19.15px;line-height:19.15px;font-size:13.4px;color:#000">107</div>
<svg class="a" style="left:954.1px;top:452.4px" width="15" height="17" viewBox="0 0 15 17"><path d="M7.3 0.9 L13.6 7.2 V11.4 L9.9 8.4 V15.8 H4.7 V8.4 L1 11.4 V7.2 Z" fill="#62ab8d" stroke="#3b8466" stroke-width="1" stroke-linejoin="round"/></svg>
<div class="a" style="left:166.7px;top:335.8px;width:293.3px;height:1px;background:#1c1c1c"></div>
<div class="a" style="left:166.7px;top:354.95px;width:293.3px;height:1px;background:#1c1c1c"></div>
<div class="a" style="left:166.7px;top:374.1px;width:293.3px;height:1px;background:#1c1c1c"></div>
<div class="a" style="left:166.7px;top:393.25px;width:293.3px;height:1px;background:#1c1c1c"></div>
<div class="a" style="left:166.7px;top:412.4px;width:293.3px;height:1px;background:#1c1c1c"></div>
<div class="a" style="left:166.7px;top:431.55px;width:293.3px;height:1px;background:#1c1c1c"></div>
<div class="a" style="left:166.7px;top:450.7px;width:293.3px;height:1px;background:#1c1c1c"></div>
<div class="a" style="left:166.7px;top:469.85px;width:293.3px;height:1px;background:#1c1c1c"></div>
<div class="a" style="left:166.7px;top:489.0px;width:293.3px;height:1px;background:#1c1c1c"></div>
<div class="a" style="left:166.7px;top:508.15px;width:293.3px;height:1px;background:#1c1c1c"></div>
<div class="a" style="left:166.7px;top:526.8px;width:293.3px;height:2px;background:#6a22a6"></div>
<div class="a" style="left:166.7px;top:335.8px;width:1px;height:192.0px;background:#1c1c1c"></div>
<div class="a" style="left:225.7px;top:335.8px;width:1px;height:192.0px;background:#1c1c1c"></div>
<div class="a" style="left:400.0px;top:335.8px;width:1px;height:192.0px;background:#1c1c1c"></div>
<div class="a" style="left:459.0px;top:335.8px;width:1px;height:192.0px;background:#1c1c1c"></div>
<div class="a" style="left:485.8px;top:335.8px;width:269.1px;height:1px;background:#1c1c1c"></div>
<div class="a" style="left:485.8px;top:354.95px;width:269.1px;height:1px;background:#1c1c1c"></div>
<div class="a" style="left:485.8px;top:374.1px;width:269.1px;height:1px;background:#1c1c1c"></div>
<div class="a" style="left:485.8px;top:393.25px;width:269.1px;height:1px;background:#1c1c1c"></div>
<div class="a" style="left:485.8px;top:412.4px;width:269.1px;height:1px;background:#1c1c1c"></div>
<div class="a" style="left:485.8px;top:431.55px;width:269.1px;height:1px;background:#1c1c1c"></div>
<div class="a" style="left:485.8px;top:450.7px;width:269.1px;height:1px;background:#1c1c1c"></div>
<div class="a" style="left:485.8px;top:469.85px;width:269.1px;height:1px;background:#1c1c1c"></div>
<div class="a" style="left:485.8px;top:489.0px;width:269.1px;height:1px;background:#1c1c1c"></div>
<div class="a" style="left:485.8px;top:508.15px;width:269.1px;height:1px;background:#1c1c1c"></div>
<div class="a" style="left:485.8px;top:526.8px;width:269.1px;height:2px;background:#6a22a6"></div>
<div class="a" style="left:485.8px;top:335.8px;width:1px;height:192.0px;background:#1c1c1c"></div>
<div class="a" style="left:567.4px;top:335.8px;width:1px;height:192.0px;background:#1c1c1c"></div>
<div class="a" style="left:654.0px;top:335.8px;width:1px;height:192.0px;background:#1c1c1c"></div>
<div class="a" style="left:753.9px;top:335.8px;width:1px;height:192.0px;background:#1c1c1c"></div>
<div class="a" style="left:781.0px;top:335.8px;width:271.0px;height:1px;background:#1c1c1c"></div>
<div class="a" style="left:781.0px;top:354.95px;width:271.0px;height:1px;background:#1c1c1c"></div>
<div class="a" style="left:781.0px;top:374.1px;width:271.0px;height:1px;background:#1c1c1c"></div>
<div class="a" style="left:781.0px;top:393.25px;width:271.0px;height:1px;background:#1c1c1c"></div>
<div class="a" style="left:781.0px;top:412.4px;width:271.0px;height:1px;background:#1c1c1c"></div>
<div class="a" style="left:781.0px;top:431.55px;width:271.0px;height:1px;background:#1c1c1c"></div>
<div class="a" style="left:781.0px;top:450.7px;width:271.0px;height:1px;background:#1c1c1c"></div>
<div class="a" style="left:781.0px;top:469.85px;width:271.0px;height:1px;background:#1c1c1c"></div>
<div class="a" style="left:781.0px;top:489.0px;width:271.0px;height:1px;background:#1c1c1c"></div>
<div class="a" style="left:781.0px;top:508.15px;width:271.0px;height:1px;background:#1c1c1c"></div>
<div class="a" style="left:781.0px;top:526.8px;width:271.0px;height:2px;background:#6a22a6"></div>
<div class="a" style="left:781.0px;top:335.8px;width:1px;height:192.0px;background:#1c1c1c"></div>
<div class="a" style="left:864.0px;top:335.8px;width:1px;height:192.0px;background:#1c1c1c"></div>
<div class="a" style="left:951.0px;top:335.8px;width:1px;height:192.0px;background:#1c1c1c"></div>
<div class="a" style="left:1051.0px;top:335.8px;width:1px;height:192.0px;background:#1c1c1c"></div>
<div class="a" style="left:166.7px;top:528.0999999999999px;width:293.3px;height:18.849999999999998px;background:#bfc8d9"></div>
<div class="a" style="left:167.2px;top:546.9499999999999px;width:292.3px;height:191.5px;background:#fff"></div>
<div class="a" style="left:485.8px;top:528.0999999999999px;width:269.09999999999997px;height:18.849999999999998px;background:#bfc8d9"></div>
<div class="a" style="left:486.3px;top:546.9499999999999px;width:268.09999999999997px;height:191.5px;background:#fff"></div>
<div class="a" style="left:781.0px;top:528.0999999999999px;width:271.0px;height:18.849999999999998px;background:#bfc8d9"></div>
<div class="a" style="left:781.5px;top:546.9499999999999px;width:270.0px;height:191.5px;background:#fff"></div>
<div class="c" style="left:167.2px;top:529.5999999999999px;width:292.3px;height:19.15px;line-height:19.15px;font-size:11.5px;font-weight:bold;color:#000">CASH FLOW</div>
<div class="a" style="left:167.2px;top:546.9499999999999px;width:233.3px;height:19.15px;background:#c6e0b4"></div>
<div class="c" style="left:167.2px;top:547.9499999999999px;width:59.0px;height:19.15px;line-height:19.15px;font-size:13.4px;color:#4e7a32">8</div>
<div class="c" style="left:226.2px;top:548.4499999999999px;width:174.3px;height:19.15px;line-height:19.15px;font-size:12.58px;color:#4e7a32">Current Ratio</div>
<div class="c" style="left:400.5px;top:547.9499999999999px;width:59.0px;height:19.15px;line-height:19.15px;font-size:12.8px;color:#000">%</div>
<div class="c" style="left:486.3px;top:547.9499999999999px;width:81.59999999999997px;height:19.15px;line-height:19.15px;font-size:13.4px;color:#000">25%</div>
<div class="c" style="left:567.9px;top:547.9499999999999px;width:86.60000000000002px;height:19.15px;line-height:19.15px;font-size:13.4px;color:#000">27%</div>
<div class="c" style="left:654.5px;top:547.9499999999999px;width:99.89999999999998px;height:19.15px;line-height:19.15px;font-size:13.4px;color:#000">107</div>
<svg class="a" style="left:657.1px;top:548.1px" width="15" height="17" viewBox="0 0 15 17"><path d="M7.3 0.9 L13.6 7.2 V11.4 L9.9 8.4 V15.8 H4.7 V8.4 L1 11.4 V7.2 Z" fill="#62ab8d" stroke="#3b8466" stroke-width="1" stroke-linejoin="round"/></svg>
<div class="c" style="left:781.5px;top:547.9499999999999px;width:83.0px;height:19.15px;line-height:19.15px;font-size:13.4px;color:#000">25%</div>
<div class="c" style="left:864.5px;top:547.9499999999999px;width:87.0px;height:19.15px;line-height:19.15px;font-size:13.4px;color:#000">27%</div>
<div class="c" style="left:951.5px;top:547.9499999999999px;width:100.0px;height:19.15px;line-height:19.15px;font-size:13.4px;color:#000">107</div>
<svg class="a" style="left:954.1px;top:548.1px" width="15" height="17" viewBox="0 0 15 17"><path d="M7.3 0.9 L13.6 7.2 V11.4 L9.9 8.4 V15.8 H4.7 V8.4 L1 11.4 V7.2 Z" fill="#62ab8d" stroke="#3b8466" stroke-width="1" stroke-linejoin="round"/></svg>
<div class="a" style="left:167.2px;top:566.0999999999999px;width:233.3px;height:19.15px;background:#c6e0b4"></div>
<div class="c" style="left:167.2px;top:567.0999999999999px;width:59.0px;height:19.15px;line-height:19.15px;font-size:13.4px;color:#4e7a32">9</div>
<div class="c" style="left:226.2px;top:567.5999999999999px;width:174.3px;height:19.15px;line-height:19.15px;font-size:12.58px;color:#4e7a32">Accounts Payable Ratio</div>
<div class="c" style="left:400.5px;top:567.0999999999999px;width:59.0px;height:19.15px;line-height:19.15px;font-size:12.8px;color:#000">%</div>
<div class="c" style="left:486.3px;top:567.0999999999999px;width:81.59999999999997px;height:19.15px;line-height:19.15px;font-size:13.4px;color:#000">31%</div>
<div class="c" style="left:567.9px;top:567.0999999999999px;width:86.60000000000002px;height:19.15px;line-height:19.15px;font-size:13.4px;color:#000">33%</div>
<div class="c" style="left:654.5px;top:567.0999999999999px;width:99.89999999999998px;height:19.15px;line-height:19.15px;font-size:13.4px;color:#000">107</div>
<svg class="a" style="left:657.1px;top:567.3px" width="15" height="17" viewBox="0 0 15 17"><path d="M7.3 0.9 L13.6 7.2 V11.4 L9.9 8.4 V15.8 H4.7 V8.4 L1 11.4 V7.2 Z" fill="#62ab8d" stroke="#3b8466" stroke-width="1" stroke-linejoin="round"/></svg>
<div class="c" style="left:781.5px;top:567.0999999999999px;width:83.0px;height:19.15px;line-height:19.15px;font-size:13.4px;color:#000">31%</div>
<div class="c" style="left:864.5px;top:567.0999999999999px;width:87.0px;height:19.15px;line-height:19.15px;font-size:13.4px;color:#000">33%</div>
<div class="c" style="left:951.5px;top:567.0999999999999px;width:100.0px;height:19.15px;line-height:19.15px;font-size:13.4px;color:#000">107</div>
<svg class="a" style="left:954.1px;top:567.3px" width="15" height="17" viewBox="0 0 15 17"><path d="M7.3 0.9 L13.6 7.2 V11.4 L9.9 8.4 V15.8 H4.7 V8.4 L1 11.4 V7.2 Z" fill="#62ab8d" stroke="#3b8466" stroke-width="1" stroke-linejoin="round"/></svg>
<div class="a" style="left:167.2px;top:585.2499999999999px;width:233.3px;height:19.15px;background:#f8cbad"></div>
<div class="c" style="left:167.2px;top:586.2499999999999px;width:59.0px;height:19.15px;line-height:19.15px;font-size:13.4px;color:#c81e1e">10</div>
<div class="c" style="left:226.2px;top:586.7499999999999px;width:174.3px;height:19.15px;line-height:19.15px;font-size:12.58px;color:#c81e1e">Accounts Receivable Days</div>
<div class="c" style="left:400.5px;top:586.2499999999999px;width:59.0px;height:19.15px;line-height:19.15px;font-size:12.8px;color:#000">Days</div>
<div class="c" style="left:486.3px;top:586.2499999999999px;width:81.59999999999997px;height:19.15px;line-height:19.15px;font-size:13.4px;color:#000">46</div>
<div class="c" style="left:567.9px;top:586.2499999999999px;width:86.60000000000002px;height:19.15px;line-height:19.15px;font-size:13.4px;color:#000">50</div>
<div class="c" style="left:654.5px;top:586.2499999999999px;width:99.89999999999998px;height:19.15px;line-height:19.15px;font-size:13.4px;color:#000">94</div>
<svg class="a" style="left:656.4px;top:588.0px" width="17" height="14" viewBox="0 0 17 14"><path d="M0.7 4.3 H8 L5.1 0.7 H10.2 L16.1 6.7 L10.2 12.7 H5.1 L8 9 H0.7 Z" fill="#f3c582" stroke="#c4953f" stroke-width="1" stroke-linejoin="round"/></svg>
<div class="c" style="left:781.5px;top:586.2499999999999px;width:83.0px;height:19.15px;line-height:19.15px;font-size:13.4px;color:#000">46</div>
<div class="c" style="left:864.5px;top:586.2499999999999px;width:87.0px;height:19.15px;line-height:19.15px;font-size:13.4px;color:#000">50</div>
<div class="c" style="left:951.5px;top:586.2499999999999px;width:100.0px;height:19.15px;line-height:19.15px;font-size:13.4px;color:#000">94</div>
<svg class="a" style="left:953.4px;top:588.0px" width="17" height="14" viewBox="0 0 17 14"><path d="M0.7 4.3 H8 L5.1 0.7 H10.2 L16.1 6.7 L10.2 12.7 H5.1 L8 9 H0.7 Z" fill="#f3c582" stroke="#c4953f" stroke-width="1" stroke-linejoin="round"/></svg>
<div class="a" style="left:167.2px;top:604.4px;width:233.3px;height:19.15px;background:#c6e0b4"></div>
<div class="c" style="left:167.2px;top:605.4px;width:59.0px;height:19.15px;line-height:19.15px;font-size:13.4px;color:#4e7a32">11</div>
<div class="c" style="left:226.2px;top:605.9px;width:174.3px;height:19.15px;line-height:19.15px;font-size:12.58px;color:#4e7a32">Accounts Receivable Ratio</div>
<div class="c" style="left:400.5px;top:605.4px;width:59.0px;height:19.15px;line-height:19.15px;font-size:12.8px;color:#000">%</div>
<div class="c" style="left:486.3px;top:605.4px;width:81.59999999999997px;height:19.15px;line-height:19.15px;font-size:13.4px;color:#000">21%</div>
<div class="c" style="left:567.9px;top:605.4px;width:86.60000000000002px;height:19.15px;line-height:19.15px;font-size:13.4px;color:#000">23%</div>
<div class="c" style="left:654.5px;top:605.4px;width:99.89999999999998px;height:19.15px;line-height:19.15px;font-size:13.4px;color:#000">107</div>
<svg class="a" style="left:657.1px;top:605.6px" width="15" height="17" viewBox="0 0 15 17"><path d="M7.3 0.9 L13.6 7.2 V11.4 L9.9 8.4 V15.8 H4.7 V8.4 L1 11.4 V7.2 Z" fill="#62ab8d" stroke="#3b8466" stroke-width="1" stroke-linejoin="round"/></svg>
<div class="c" style="left:781.5px;top:605.4px;width:83.0px;height:19.15px;line-height:19.15px;font-size:13.4px;color:#000">21%</div>
<div class="c" style="left:864.5px;top:605.4px;width:87.0px;height:19.15px;line-height:19.15px;font-size:13.4px;color:#000">23%</div>
<div class="c" style="left:951.5px;top:605.4px;width:100.0px;height:19.15px;line-height:19.15px;font-size:13.4px;color:#000">107</div>
<svg class="a" style="left:954.1px;top:605.6px" width="15" height="17" viewBox="0 0 15 17"><path d="M7.3 0.9 L13.6 7.2 V11.4 L9.9 8.4 V15.8 H4.7 V8.4 L1 11.4 V7.2 Z" fill="#62ab8d" stroke="#3b8466" stroke-width="1" stroke-linejoin="round"/></svg>
<div class="a" style="left:166.7px;top:546.45px;width:293.3px;height:1px;background:#1c1c1c"></div>
<div class="a" style="left:166.7px;top:565.6px;width:293.3px;height:1px;background:#1c1c1c"></div>
<div class="a" style="left:166.7px;top:584.75px;width:293.3px;height:1px;background:#1c1c1c"></div>
<div class="a" style="left:166.7px;top:603.9px;width:293.3px;height:1px;background:#1c1c1c"></div>
<div class="a" style="left:166.7px;top:623.05px;width:293.3px;height:1px;background:#1c1c1c"></div>
<div class="a" style="left:166.7px;top:642.2px;width:293.3px;height:1px;background:#1c1c1c"></div>
<div class="a" style="left:166.7px;top:661.35px;width:293.3px;height:1px;background:#1c1c1c"></div>
<div class="a" style="left:166.7px;top:680.5px;width:293.3px;height:1px;background:#1c1c1c"></div>
<div class="a" style="left:166.7px;top:699.65px;width:293.3px;height:1px;background:#1c1c1c"></div>
<div class="a" style="left:166.7px;top:718.8px;width:293.3px;height:1px;background:#1c1c1c"></div>
<div class="a" style="left:166.7px;top:737.45px;width:293.3px;height:2px;background:#6a22a6"></div>
<div class="a" style="left:166.7px;top:546.4499999999999px;width:1px;height:192.0px;background:#1c1c1c"></div>
<div class="a" style="left:225.7px;top:546.4499999999999px;width:1px;height:192.0px;background:#1c1c1c"></div>
<div class="a" style="left:400.0px;top:546.4499999999999px;width:1px;height:192.0px;background:#1c1c1c"></div>
<div class="a" style="left:459.0px;top:546.4499999999999px;width:1px;height:192.0px;background:#1c1c1c"></div>
<div class="a" style="left:485.8px;top:546.45px;width:269.1px;height:1px;background:#1c1c1c"></div>
<div class="a" style="left:485.8px;top:565.6px;width:269.1px;height:1px;background:#1c1c1c"></div>
<div class="a" style="left:485.8px;top:584.75px;width:269.1px;height:1px;background:#1c1c1c"></div>
<div class="a" style="left:485.8px;top:603.9px;width:269.1px;height:1px;background:#1c1c1c"></div>
<div class="a" style="left:485.8px;top:623.05px;width:269.1px;height:1px;background:#1c1c1c"></div>
<div class="a" style="left:485.8px;top:642.2px;width:269.1px;height:1px;background:#1c1c1c"></div>
<div class="a" style="left:485.8px;top:661.35px;width:269.1px;height:1px;background:#1c1c1c"></div>
<div class="a" style="left:485.8px;top:680.5px;width:269.1px;height:1px;background:#1c1c1c"></div>
<div class="a" style="left:485.8px;top:699.65px;width:269.1px;height:1px;background:#1c1c1c"></div>
<div class="a" style="left:485.8px;top:718.8px;width:269.1px;height:1px;background:#1c1c1c"></div>
<div class="a" style="left:485.8px;top:737.45px;width:269.1px;height:2px;background:#6a22a6"></div>
<div class="a" style="left:485.8px;top:546.4499999999999px;width:1px;height:192.0px;background:#1c1c1c"></div>
<div class="a" style="left:567.4px;top:546.4499999999999px;width:1px;height:192.0px;background:#1c1c1c"></div>
<div class="a" style="left:654.0px;top:546.4499999999999px;width:1px;height:192.0px;background:#1c1c1c"></div>
<div class="a" style="left:753.9px;top:546.4499999999999px;width:1px;height:192.0px;background:#1c1c1c"></div>
<div class="a" style="left:781.0px;top:546.45px;width:271.0px;height:1px;background:#1c1c1c"></div>
<div class="a" style="left:781.0px;top:565.6px;width:271.0px;height:1px;background:#1c1c1c"></div>
<div class="a" style="left:781.0px;top:584.75px;width:271.0px;height:1px;background:#1c1c1c"></div>
<div class="a" style="left:781.0px;top:603.9px;width:271.0px;height:1px;background:#1c1c1c"></div>
<div class="a" style="left:781.0px;top:623.05px;width:271.0px;height:1px;background:#1c1c1c"></div>
<div class="a" style="left:781.0px;top:642.2px;width:271.0px;height:1px;background:#1c1c1c"></div>
<div class="a" style="left:781.0px;top:661.35px;width:271.0px;height:1px;background:#1c1c1c"></div>
<div class="a" style="left:781.0px;top:680.5px;width:271.0px;height:1px;background:#1c1c1c"></div>
<div class="a" style="left:781.0px;top:699.65px;width:271.0px;height:1px;background:#1c1c1c"></div>
<div class="a" style="left:781.0px;top:718.8px;width:271.0px;height:1px;background:#1c1c1c"></div>
<div class="a" style="left:781.0px;top:737.45px;width:271.0px;height:2px;background:#6a22a6"></div>
<div class="a" style="left:781.0px;top:546.4499999999999px;width:1px;height:192.0px;background:#1c1c1c"></div>
<div class="a" style="left:864.0px;top:546.4499999999999px;width:1px;height:192.0px;background:#1c1c1c"></div>
<div class="a" style="left:951.0px;top:546.4499999999999px;width:1px;height:192.0px;background:#1c1c1c"></div>
<div class="a" style="left:1051.0px;top:546.4499999999999px;width:1px;height:192.0px;background:#1c1c1c"></div>
<div class="a" style="left:166.7px;top:738.75px;width:293.3px;height:18.849999999999998px;background:#bfc8d9"></div>
<div class="a" style="left:167.2px;top:757.6px;width:292.3px;height:85.5px;background:#fff"></div>
<div class="a" style="left:485.8px;top:738.75px;width:269.09999999999997px;height:18.849999999999998px;background:#bfc8d9"></div>
<div class="a" style="left:486.3px;top:757.6px;width:268.09999999999997px;height:85.5px;background:#fff"></div>
<div class="a" style="left:781.0px;top:738.75px;width:271.0px;height:18.849999999999998px;background:#bfc8d9"></div>
<div class="a" style="left:781.5px;top:757.6px;width:270.0px;height:85.5px;background:#fff"></div>
<div class="a" style="left:166.7px;top:757.1px;width:293.3px;height:1px;background:#1c1c1c"></div>
<div class="a" style="left:166.7px;top:776.25px;width:293.3px;height:1px;background:#1c1c1c"></div>
<div class="a" style="left:166.7px;top:795.4px;width:293.3px;height:1px;background:#1c1c1c"></div>
<div class="a" style="left:166.7px;top:814.55px;width:293.3px;height:1px;background:#1c1c1c"></div>
<div class="a" style="left:166.7px;top:833.7px;width:293.3px;height:1px;background:#1c1c1c"></div>
<div class="a" style="left:166.7px;top:757.1px;width:1px;height:86.0px;background:#1c1c1c"></div>
<div class="a" style="left:225.7px;top:757.1px;width:1px;height:86.0px;background:#1c1c1c"></div>
<div class="a" style="left:400.0px;top:757.1px;width:1px;height:86.0px;background:#1c1c1c"></div>
<div class="a" style="left:459.0px;top:757.1px;width:1px;height:86.0px;background:#1c1c1c"></div>
<div class="a" style="left:485.8px;top:757.1px;width:269.1px;height:1px;background:#1c1c1c"></div>
<div class="a" style="left:485.8px;top:776.25px;width:269.1px;height:1px;background:#1c1c1c"></div>
<div class="a" style="left:485.8px;top:795.4px;width:269.1px;height:1px;background:#1c1c1c"></div>
<div class="a" style="left:485.8px;top:814.55px;width:269.1px;height:1px;background:#1c1c1c"></div>
<div class="a" style="left:485.8px;top:833.7px;width:269.1px;height:1px;background:#1c1c1c"></div>
<div class="a" style="left:485.8px;top:757.1px;width:1px;height:86.0px;background:#1c1c1c"></div>
<div class="a" style="left:567.4px;top:757.1px;width:1px;height:86.0px;background:#1c1c1c"></div>
<div class="a" style="left:654.0px;top:757.1px;width:1px;height:86.0px;background:#1c1c1c"></div>
<div class="a" style="left:753.9px;top:757.1px;width:1px;height:86.0px;background:#1c1c1c"></div>
<div class="a" style="left:781.0px;top:757.1px;width:271.0px;height:1px;background:#1c1c1c"></div>
<div class="a" style="left:781.0px;top:776.25px;width:271.0px;height:1px;background:#1c1c1c"></div>
<div class="a" style="left:781.0px;top:795.4px;width:271.0px;height:1px;background:#1c1c1c"></div>
<div class="a" style="left:781.0px;top:814.55px;width:271.0px;height:1px;background:#1c1c1c"></div>
<div class="a" style="left:781.0px;top:833.7px;width:271.0px;height:1px;background:#1c1c1c"></div>
<div class="a" style="left:781.0px;top:757.1px;width:1px;height:86.0px;background:#1c1c1c"></div>
<div class="a" style="left:864.0px;top:757.1px;width:1px;height:86.0px;background:#1c1c1c"></div>
<div class="a" style="left:951.0px;top:757.1px;width:1px;height:86.0px;background:#1c1c1c"></div>
<div class="a" style="left:1051.0px;top:757.1px;width:1px;height:86.0px;background:#1c1c1c"></div>
<div class="a" style="left:1083.2px;top:280px;width:174.0px;height:36.5px;background:#d9d9d9"></div>
<div class="c" style="left:1083.7px;top:281.5px;width:173.0px;height:18px;line-height:18px;font-size:12.3px;font-weight:bold;color:#000">Index Level</div>
<div class="c" style="left:1083.7px;top:299.5px;width:173.0px;height:18px;line-height:18px;font-size:12.3px;font-weight:bold;color:#000">Color Intervals</div>
<div class="a" style="left:1083.2px;top:316.2px;width:174.0px;height:1.2px;background:#7030a0"></div>
<div class="a" style="left:1083.7px;top:317.3px;width:173.0px;height:57.30000000000001px;background:#f2f2f2"></div>
<div class="a" style="left:1083.7px;top:317.3px;width:91.79999999999995px;height:57.30000000000001px;background:#c9d1e0"></div>
<div class="c" style="left:1083.7px;top:318.15000000000003px;width:91.79999999999995px;height:19.15px;line-height:19.15px;font-size:12.8px;font-weight:bold;color:#000">Green</div>
<div class="c" style="left:1175.5px;top:318.15000000000003px;width:81.20000000000005px;height:19.15px;line-height:19.15px;font-size:13.4px;color:#000">-</div>
<div class="c" style="left:1083.7px;top:337.3px;width:91.79999999999995px;height:19.15px;line-height:19.15px;font-size:12.8px;font-weight:bold;color:#000">Yellow</div>
<div class="c" style="left:1175.5px;top:337.3px;width:81.20000000000005px;height:19.15px;line-height:19.15px;font-size:13.4px;color:#000">100</div>
<div class="c" style="left:1083.7px;top:356.45px;width:91.79999999999995px;height:19.15px;line-height:19.15px;font-size:12.8px;font-weight:bold;color:#000">Red</div>
<div class="c" style="left:1175.5px;top:356.45px;width:81.20000000000005px;height:19.15px;line-height:19.15px;font-size:13.4px;color:#000">80</div>
<div class="a" style="left:1083.2px;top:335.8px;width:174.0px;height:1px;background:#1c1c1c"></div>
<div class="a" style="left:1083.2px;top:354.95px;width:174.0px;height:1px;background:#1c1c1c"></div>
<div class="a" style="left:1083.2px;top:374.1px;width:174.0px;height:1px;background:#1c1c1c"></div>
<div class="a" style="left:1083.2px;top:317px;width:1px;height:58.1px;background:#1c1c1c"></div>
<div class="a" style="left:1175.0px;top:317px;width:1px;height:58.1px;background:#1c1c1c"></div>
<div class="a" style="left:1256.2px;top:317px;width:1px;height:58.1px;background:#1c1c1c"></div>
<div class="a" style="left:1084.3px;top:395px;width:218.2px;height:246.5px;background:#d6dce5;border:1px solid #b9bec8;box-shadow:0.5px 1px 4.5px 0.5px rgba(0,0,0,.55)"></div>
<div class="a" style="left:1088px;top:403.2px;font-size:10.35px;line-height:12.4px;font-style:italic;font-weight:bold;color:#1c1c1c">DASHBOARD</div>
<div class="a" style="left:1089px;top:436.9px;font-size:11.5px;line-height:13.8px;color:#1c1c1c">•</div>
<div class="a" style="left:1098px;top:436.9px;font-size:11.49px;line-height:13.8px;font-style:italic;color:#1c1c1c;-webkit-text-stroke:0.2px #1c1c1c">Choose the month that you would like</div>
<div class="a" style="left:1098px;top:450.65px;font-size:11.49px;line-height:13.8px;font-style:italic;color:#1c1c1c;-webkit-text-stroke:0.2px #1c1c1c">to display it's properties from the cell</div>
<div class="a" style="left:1098px;top:464.4px;font-size:11.49px;line-height:13.8px;font-style:italic;color:#1c1c1c;-webkit-text-stroke:0.2px #1c1c1c">where blue arrow points.</div>
<div class="a" style="left:1089px;top:482.9px;font-size:11.5px;line-height:13.8px;color:#1c1c1c">•</div>
<div class="a" style="left:1098px;top:482.9px;font-size:11.49px;line-height:13.8px;font-style:italic;color:#1c1c1c;-webkit-text-stroke:0.2px #1c1c1c">Once selected the calculations will be</div>
<div class="a" style="left:1098px;top:496.65px;font-size:11.49px;line-height:13.8px;font-style:italic;color:#1c1c1c;-webkit-text-stroke:0.2px #1c1c1c">done automatically. The one with the</div>
<div class="a" style="left:1098px;top:510.4px;font-size:11.49px;line-height:13.8px;font-style:italic;color:#1c1c1c;-webkit-text-stroke:0.2px #1c1c1c">lower better cases (which you stated in</div>
<div class="a" style="left:1098px;top:524.15px;font-size:11.49px;line-height:13.8px;font-style:italic;color:#1c1c1c;-webkit-text-stroke:0.2px #1c1c1c">settings &gt; Metric info section ) will be</div>
<div class="a" style="left:1098px;top:537.9px;font-size:11.49px;line-height:13.8px;font-style:italic;color:#1c1c1c;-webkit-text-stroke:0.2px #1c1c1c">calculated distinctively.</div>
<div class="a" style="left:1089px;top:557.4px;font-size:11.5px;line-height:13.8px;color:#1c1c1c">•</div>
<div class="a" style="left:1098px;top:557.4px;font-size:11.49px;line-height:13.8px;font-style:italic;color:#1c1c1c;-webkit-text-stroke:0.2px #1c1c1c">You may change the name of the</div>
<div class="a" style="left:1098px;top:571.15px;font-size:11.49px;line-height:13.8px;font-style:italic;color:#1c1c1c;-webkit-text-stroke:0.2px #1c1c1c">categories.</div>
<div class="a" style="left:1089px;top:589.9px;font-size:11.5px;line-height:13.8px;color:#1c1c1c">•</div>
<div class="a" style="left:1098px;top:589.9px;font-size:11.49px;line-height:13.8px;font-style:italic;color:#1c1c1c;-webkit-text-stroke:0.2px #1c1c1c">If there is no proper format on the cell</div>
<div class="a" style="left:1098px;top:603.65px;font-size:11.49px;line-height:13.8px;font-style:italic;color:#1c1c1c;-webkit-text-stroke:0.2px #1c1c1c">you may select the cell and change its</div>
<div class="a" style="left:1098px;top:617.4px;font-size:11.49px;line-height:13.8px;font-style:italic;color:#1c1c1c;-webkit-text-stroke:0.2px #1c1c1c">format.</div>
<div class="a" style="left:566.9px;top:203.8px;width:188.9px;height:28.6px;border:2px solid #217346;background:transparent"></div>
<div class="a" style="left:753.3px;top:229.6px;width:4px;height:3.4px;background:#217346;border:0.6px solid #fff"></div>
<div class="a" style="left:755.4px;top:213px;width:17.2px;height:17.9px;background:#e1e4ea;border:1px solid;border-color:#fafafa #b2b4bc #b2b4bc #fafafa"></div>
<svg class="a" style="left:760.6px;top:220.6px" width="7" height="4" viewBox="0 0 7 4"><path d="M0 0 H6.4 L3.2 3.4 Z" fill="#666"/></svg>
<div class="a" style="left:567.3px;top:231.3px;width:205.3px;height:51.9px;background:#fff;border:1.1px solid #1c1c1c;overflow:hidden"><div class="a" style="left:0px;top:0.1px;width:202.2px;height:12.2px;background:#0078d7"></div><div class="a" style="left:3.6px;top:0.1px;height:12.55px;width:198px;overflow:hidden"><div class="a" style="left:0;top:1.3px;font-size:10.8px;line-height:12.55px;transform:scaleX(0.935);transform-origin:0 50%;color:#fff">According to Monthly Index</div></div><div class="a" style="left:3.6px;top:12.65px;height:12.55px;width:198px;overflow:hidden"><div class="a" style="left:0;top:1.3px;font-size:10.8px;line-height:12.55px;transform:scaleX(0.935);transform-origin:0 50%;color:#1e1e1e">According to Cumulative Index</div></div><div class="a" style="left:3.6px;top:25.2px;height:12.55px;width:198px;overflow:hidden"><div class="a" style="left:0;top:1.3px;font-size:10.8px;line-height:12.55px;transform:scaleX(0.935);transform-origin:0 50%;color:#1e1e1e">According to Both</div></div><div class="a" style="left:3.6px;top:37.75px;height:12.55px;width:198px;overflow:hidden"><div class="a" style="left:0;top:1.3px;font-size:10.8px;line-height:12.55px;transform:scaleX(0.935);transform-origin:0 50%;color:#1e1e1e">Do not highligt</div></div></div>
<div class="a" style="left:1581px;top:157px;width:17.3px;height:688px;background:#f4f4f4;border-radius:9px"></div>
<div class="a" style="left:1585.2px;top:174px;width:9px;height:326px;background:#707070;border-radius:4.5px"></div>
<svg class="a" style="left:1584.8px;top:160.8px" width="10" height="8" viewBox="0 0 10 8"><path d="M5 0.8 L9.3 6.5 Q9.5 7.3 8.6 7.3 H1.4 Q0.5 7.3 0.7 6.5 Z" fill="#707070"/></svg>
<svg class="a" style="left:1585px;top:832.5px" width="10" height="8" viewBox="0 0 10 8"><path d="M5 7.2 L9.3 1.5 Q9.5 0.7 8.6 0.7 H1.4 Q0.5 0.7 0.7 1.5 Z" fill="#707070"/></svg>
<!-- tab bar -->
<div class="a" style="left:0px;top:843.1px;width:1600px;height:34px;background:#e6e6e6"></div>
<svg class="a" style="left:25px;top:853px" width="10" height="14" viewBox="0 0 10 14"><path d="M8 1.2 L2 7 L8 12.8" fill="none" stroke="#333" stroke-width="1.3"/></svg>
<svg class="a" style="left:59px;top:853px" width="10" height="14" viewBox="0 0 10 14"><path d="M2 1.2 L8 7 L2 12.8" fill="none" stroke="#a0a0a0" stroke-width="1.3"/></svg>
<div class="a" style="left:90px;top:858.3px;width:3px;height:3px;background:#333;border-radius:50%"></div>
<div class="a" style="left:94.6px;top:858.3px;width:3px;height:3px;background:#333;border-radius:50%"></div>
<div class="a" style="left:99.2px;top:858.3px;width:3px;height:3px;background:#333;border-radius:50%"></div>
<div class="a" style="left:117.5px;top:847.7px;width:126.30000000000001px;height:24.2px;background:#d9e2f3;border-radius:4.5px"></div>
<div class="c" style="left:117.5px;top:847.5px;width:126.30000000000001px;height:25px;line-height:25px;font-size:15.71px;color:#1b1b1b;line-height:25.2px"><span style="display:inline-block;transform:scaleX(0.91)">Target_Database</span></div>
<div class="a" style="left:253.2px;top:847.7px;width:138.8px;height:24.2px;background:#a6a6a6;border-radius:4.5px"></div>
<div class="c" style="left:253.2px;top:847.5px;width:138.8px;height:25px;line-height:25px;font-size:15.71px;color:#1b1b1b;line-height:25.2px"><span style="display:inline-block;transform:scaleX(0.91)">Cumulative_Actual</span></div>
<div class="a" style="left:401.8px;top:847.7px;width:139.7px;height:24.2px;background:#a6a6a6;border-radius:4.5px"></div>
<div class="c" style="left:401.8px;top:847.5px;width:139.7px;height:25px;line-height:25px;font-size:15.71px;color:#1b1b1b;line-height:25.2px"><span style="display:inline-block;transform:scaleX(0.91)">Cumulative_Target</span></div>
<div class="a" style="left:550.8px;top:847.7px;width:119.20000000000005px;height:24.2px;background:#7030a0;border-radius:4.5px"></div>
<div class="c" style="left:550.8px;top:847.5px;width:119.20000000000005px;height:25px;line-height:25px;font-size:15.44px;color:#fff;line-height:25.2px"><span style="display:inline-block;transform:scaleX(0.91)">Metric_Analysis</span></div>
<div class="a" style="left:248.5px;top:850.5px;width:1px;height:20px;background:#d0d0d0"></div>
<div class="a" style="left:397.2px;top:850.5px;width:1px;height:20px;background:#d0d0d0"></div>
<div class="a" style="left:546px;top:850.5px;width:1px;height:20px;background:#d0d0d0"></div>
<div class="a" style="left:675px;top:850.5px;width:1px;height:20px;background:#d0d0d0"></div>
<div class="a" style="left:800.5px;top:850.5px;width:1px;height:20px;background:#d0d0d0"></div>
<div class="a" style="left:853px;top:850.5px;width:1px;height:20px;background:#d0d0d0"></div>
<div class="a" style="left:678.8px;top:843px;width:117px;height:28.5px;background:linear-gradient(#fdfdfb,#fdf6dc);border-radius:0 0 6px 6px;box-shadow:0 1px 2px rgba(0,0,0,.12)"></div>
<div class="c" style="left:678.8px;top:845.6px;width:117px;height:24px;line-height:24px;font-size:16.15px;color:#1b1b1b;-webkit-text-stroke:0.3px #1b1b1b"><span style="display:inline-block;transform:scaleX(0.91)">Kpi_Dashboard</span></div>
<div class="a" style="left:688px;top:868px;width:99.5px;height:1.6px;background:#107c41"></div>
<div class="c" style="left:805px;top:847.6px;width:45px;height:25px;line-height:25px;font-size:15.38px;color:#333"><span style="display:inline-block;transform:scaleX(0.91)">ToU</span></div>
<svg class="a" style="left:896px;top:853px" width="13" height="13" viewBox="0 0 13 13"><path d="M6.5 0.5 V12.5 M0.5 6.5 H12.5" stroke="#8a8a8a" stroke-width="1.1"/></svg>
<div class="a" style="left:961.6px;top:854.6px;width:2.8px;height:2.8px;background:#333;border-radius:50%"></div>
<div class="a" style="left:961.6px;top:859.3px;width:2.8px;height:2.8px;background:#333;border-radius:50%"></div>
<div class="a" style="left:961.6px;top:864px;width:2.8px;height:2.8px;background:#333;border-radius:50%"></div>
<div class="a" style="left:980px;top:850.5px;width:599px;height:17.8px;background:#f4f4f4;border-radius:9px"></div>
<div class="a" style="left:997.5px;top:855px;width:333.5px;height:9.5px;background:#707070;border-radius:4.8px"></div>
<svg class="a" style="left:984.5px;top:854.5px" width="8" height="10" viewBox="0 0 8 10"><path d="M0.8 5 L6.5 0.7 Q7.3 0.5 7.3 1.4 V8.6 Q7.3 9.5 6.5 9.3 Z" fill="#707070"/></svg>
<svg class="a" style="left:1567px;top:854.5px" width="8" height="10" viewBox="0 0 8 10"><path d="M7.2 5 L1.5 0.7 Q0.7 0.5 0.7 1.4 V8.6 Q0.7 9.5 1.5 9.3 Z" fill="#707070"/></svg>
<!-- status bar -->
<div class="a" style="left:0px;top:877.2px;width:1600px;height:21.4px;background:#f3f3f3"></div>
<div class="a ui" style="left:7.5px;top:882.26px;font-size:11.91px;line-height:14.3px;color:#3b3b3b;transform:scaleX(0.89);transform-origin:0 50%;">Ready</div>
<svg class="a" style="left:57px;top:881px" width="18" height="16" viewBox="0 0 18 16" fill="none" stroke="#444" stroke-width="1.1"><path d="M6.5 13.8 H1.8 V1.6 H15.6 V5.5"/><path d="M1.8 3.7 H15.6" stroke-width="1.3"/><path d="M4 6.4 H5.6 M4 8.8 H5.2 M4 11.2 H5.2" stroke-width="1"/><circle cx="11.5" cy="9.8" r="4.3" fill="#f3f3f3"/><circle cx="11.5" cy="9.8" r="1.9" fill="#222" stroke="none"/></svg>
<svg class="a" style="left:90px;top:880px" width="18" height="17" viewBox="0 0 18 17" fill="none" stroke-linecap="round" stroke-linejoin="round"><g stroke="#444" stroke-width="3"><path d="M3 4.2 Q4.5 6.2 8 6.2 Q11.5 6.2 13 4.2"/><path d="M8 6.4 V9.5 L5.2 14.6 M8 9.5 L9.6 12"/></g><g stroke="#f3f3f3" stroke-width="1"><path d="M3 4.2 Q4.5 6.2 8 6.2 Q11.5 6.2 13 4.2"/><path d="M8 6.4 V9.5 L5.2 14.6 M8 9.5 L9.6 12"/></g><circle cx="8" cy="3" r="1.9" stroke="#444" stroke-width="1" fill="#f3f3f3"/><path d="M9.8 8.8 L16.4 15.6 M16.4 8.8 L9.8 15.6" stroke="#444" stroke-width="1.1"/></svg>
<div class="a ui" style="left:110px;top:882.26px;font-size:11.87px;line-height:14.2px;color:#3b3b3b;transform:scaleX(0.89);transform-origin:0 50%;">Accessibility: Investigate</div>
<div class="a" style="left:1290px;top:877px;width:41px;height:22px;background:#dfdfdf"></div>
<svg class="a" style="left:1303px;top:881px" width="15" height="15" viewBox="0 0 15 15" fill="none" stroke="#3b3b3b" stroke-width="1.1"><rect x="1" y="1" width="13" height="13"/><path d="M1 5.3 H14 M1 9.7 H14 M5.3 1 V14 M9.7 1 V14"/></svg>
<svg class="a" style="left:1345px;top:881px" width="15" height="15" viewBox="0 0 15 15" fill="none" stroke="#3b3b3b" stroke-width="1.1"><rect x="1" y="1" width="13" height="13" rx="1"/><rect x="4" y="3.5" width="7" height="8"/><path d="M6 6 H9 M6 8 H9 M6 10 H9" stroke-width="0.8"/></svg>
<svg class="a" style="left:1386px;top:881px" width="16" height="15" viewBox="0 0 16 15" fill="none" stroke="#3b3b3b" stroke-width="1.1"><path d="M1 1 H15 V14 H1 Z"/><path d="M4.5 1 V8 H12 V1 M8.2 1 V8"/></svg>
<div class="a" style="left:1420.5px;top:887.5px;width:8px;height:1px;background:#555"></div>
<div class="a" style="left:1434px;top:887.5px;width:104px;height:1px;background:#8a8a8a"></div>
<div class="a" style="left:1478.5px;top:882px;width:4.5px;height:11.5px;background:#5c5c5c"></div>
<div class="a" style="left:1486px;top:884.5px;width:1px;height:7px;background:#8a8a8a"></div>
<svg class="a" style="left:1543px;top:884px" width="9" height="9" viewBox="0 0 9 9"><path d="M4.5 0.5 V8.5 M0.5 4.5 H8.5" stroke="#555" stroke-width="1"/></svg>
<div class="a ui" style="left:1565px;top:882.26px;font-size:11.91px;line-height:14.3px;color:#3b3b3b;transform:scaleX(0.89);transform-origin:0 50%;">%90</div>
</body></html>
